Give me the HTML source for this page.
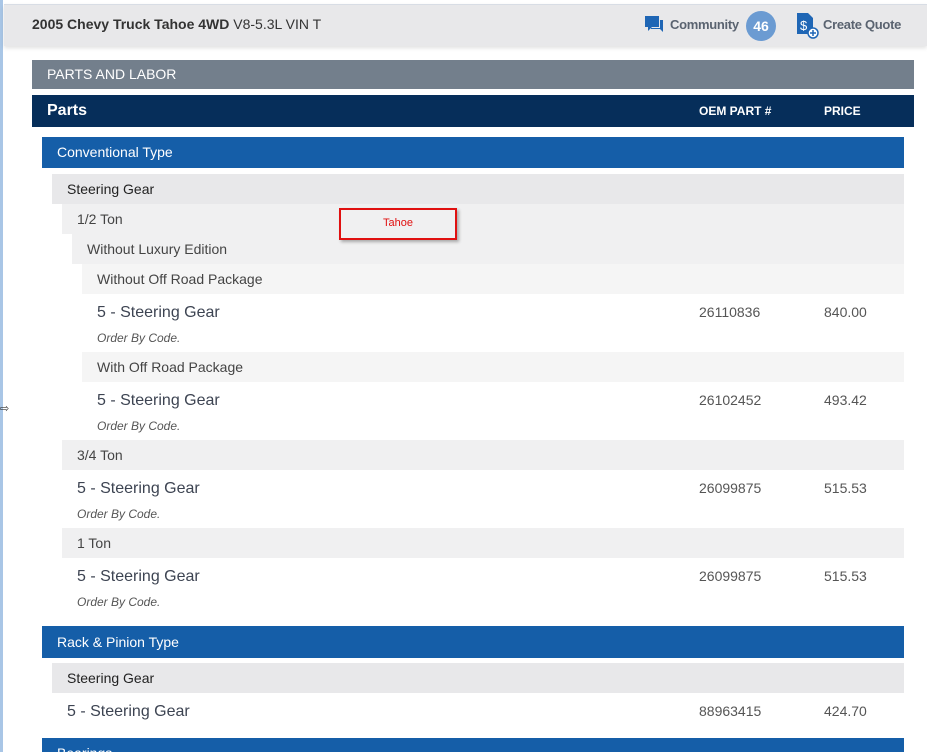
<!DOCTYPE html>
<html><head><style>
*{margin:0;padding:0;box-sizing:border-box}
html,body{width:927px;height:752px;overflow:hidden}
body{background:#fff;font-family:"Liberation Sans",sans-serif;position:relative;color:#333}
.a{position:absolute}
.lb{left:0;top:0;width:3px;height:752px;background:#a9c6e6}
.hdr{left:4px;top:4px;width:923px;height:42px;background:#e8e8ea;box-shadow:0 2px 4px rgba(0,0,0,.12);border-top:1px solid #d8dde5}
.row{position:absolute;right:23px;font-size:14px;line-height:30px;padding-left:15px}
.g1{background:#e8e8ea;color:#222}
.g2{background:#f0f0f1;color:#444}
.g3{background:#f5f5f5;color:#444}
.blue{background:#155ea8;color:#fff;font-size:14px}
.pt{position:absolute;font-size:16px;color:#3d4452}
.ob{position:absolute;font-size:12px;font-style:italic;color:#555}
.num{position:absolute;font-size:14px;color:#555}
</style></head><body>
<div class="a lb"></div>
<div class="a hdr">
<div class="a" style="left:28px;top:11px;font-size:14px;color:#333"><b>2005 Chevy Truck Tahoe 4WD</b> V8-5.3L VIN T</div>
<svg class="a" style="left:641px;top:11px" width="20" height="18" viewBox="0 0 20 18"><rect x="0" y="0" width="14" height="11" fill="#1f66b5"/><path d="M3 11v4l4-4z" fill="#1f66b5"/><path d="M15 4h3v12l-3-3H6v-1h9z" fill="#1f66b5"/></svg>
<div class="a" style="left:666px;top:12px;font-size:13px;color:#5a6370;font-weight:bold;letter-spacing:-0.3px">Community</div>
<div class="a" style="left:742px;top:6px;width:30px;height:30px;border-radius:50%;background:#6b9bd2;color:#fff;font-weight:bold;font-size:14px;text-align:center;line-height:30px">46</div>
<svg class="a" style="left:792px;top:8px" width="24" height="26" viewBox="0 0 24 26"><path d="M1 0h11l5 5v16H1z" fill="#1f66b5"/><text x="4" y="17" font-size="13" fill="#fff" font-family="Liberation Sans">$</text><circle cx="17" cy="20" r="5" fill="#fff" stroke="#1f66b5" stroke-width="1.5"/><path d="M17 17v6M14 20h6" stroke="#1f66b5" stroke-width="1.5"/></svg>
<div class="a" style="left:819px;top:12px;font-size:13px;color:#5a6370;font-weight:bold;letter-spacing:-0.3px">Create Quote</div>
</div>
<div class="a" style="left:32px;top:60px;width:882px;height:29px;background:#737f8c;color:#fff;font-size:14px;line-height:29px;padding-left:15px">PARTS AND LABOR</div>
<div class="a" style="left:32px;top:95px;width:882px;height:32px;background:#062e5a;color:#fff;line-height:32px;padding-left:15px;font-size:16px;font-weight:bold">Parts
<span class="a" style="left:667px;font-size:12px">OEM PART #</span><span class="a" style="left:792px;font-size:12px">PRICE</span></div>
<div class="row blue" style="left:42px;top:137px;height:31px;line-height:31px">Conventional Type</div>
<div class="row g1" style="left:52px;top:174px">Steering Gear</div>
<div class="row g2" style="left:62px;top:204px">1/2 Ton</div>
<div class="row g2" style="left:72px;top:234px">Without Luxury Edition</div>
<div class="row g3" style="left:82px;top:264px">Without Off Road Package</div>
<div class="pt" style="left:97px;top:304px">5 - Steering Gear</div><div class="ob" style="left:97px;top:331px">Order By Code.</div>
<div class="num" style="left:699px;top:304px">26110836</div><div class="num" style="left:824px;top:304px">840.00</div>
<div class="row g3" style="left:82px;top:352px">With Off Road Package</div>
<div class="pt" style="left:97px;top:392px">5 - Steering Gear</div><div class="ob" style="left:97px;top:419px">Order By Code.</div>
<div class="num" style="left:699px;top:392px">26102452</div><div class="num" style="left:824px;top:392px">493.42</div>
<div class="row g2" style="left:62px;top:440px">3/4 Ton</div>
<div class="pt" style="left:77px;top:480px">5 - Steering Gear</div><div class="ob" style="left:77px;top:507px">Order By Code.</div>
<div class="num" style="left:699px;top:480px">26099875</div><div class="num" style="left:824px;top:480px">515.53</div>
<div class="row g2" style="left:62px;top:528px">1 Ton</div>
<div class="pt" style="left:77px;top:568px">5 - Steering Gear</div><div class="ob" style="left:77px;top:595px">Order By Code.</div>
<div class="num" style="left:699px;top:568px">26099875</div><div class="num" style="left:824px;top:568px">515.53</div>
<div class="row blue" style="left:42px;top:626px;height:32px;line-height:32px">Rack &amp; Pinion Type</div>
<div class="row g1" style="left:52px;top:663px">Steering Gear</div>
<div class="pt" style="left:67px;top:703px">5 - Steering Gear</div>
<div class="num" style="left:699px;top:703px">88963415</div><div class="num" style="left:824px;top:703px">424.70</div>
<div class="row blue" style="left:42px;top:738px;height:14px;line-height:31px;overflow:hidden">Bearings</div>
<div class="a" style="left:339px;top:208px;width:118px;height:32px;border:2px solid #e01010;box-shadow:2px 2px 3px rgba(0,0,0,.3);color:#e01010;font-size:11px;text-align:center;line-height:27px">Tahoe</div>
<div class="a" style="left:0;top:402px;font-size:11px;color:#333">⇨</div>
</body></html>
